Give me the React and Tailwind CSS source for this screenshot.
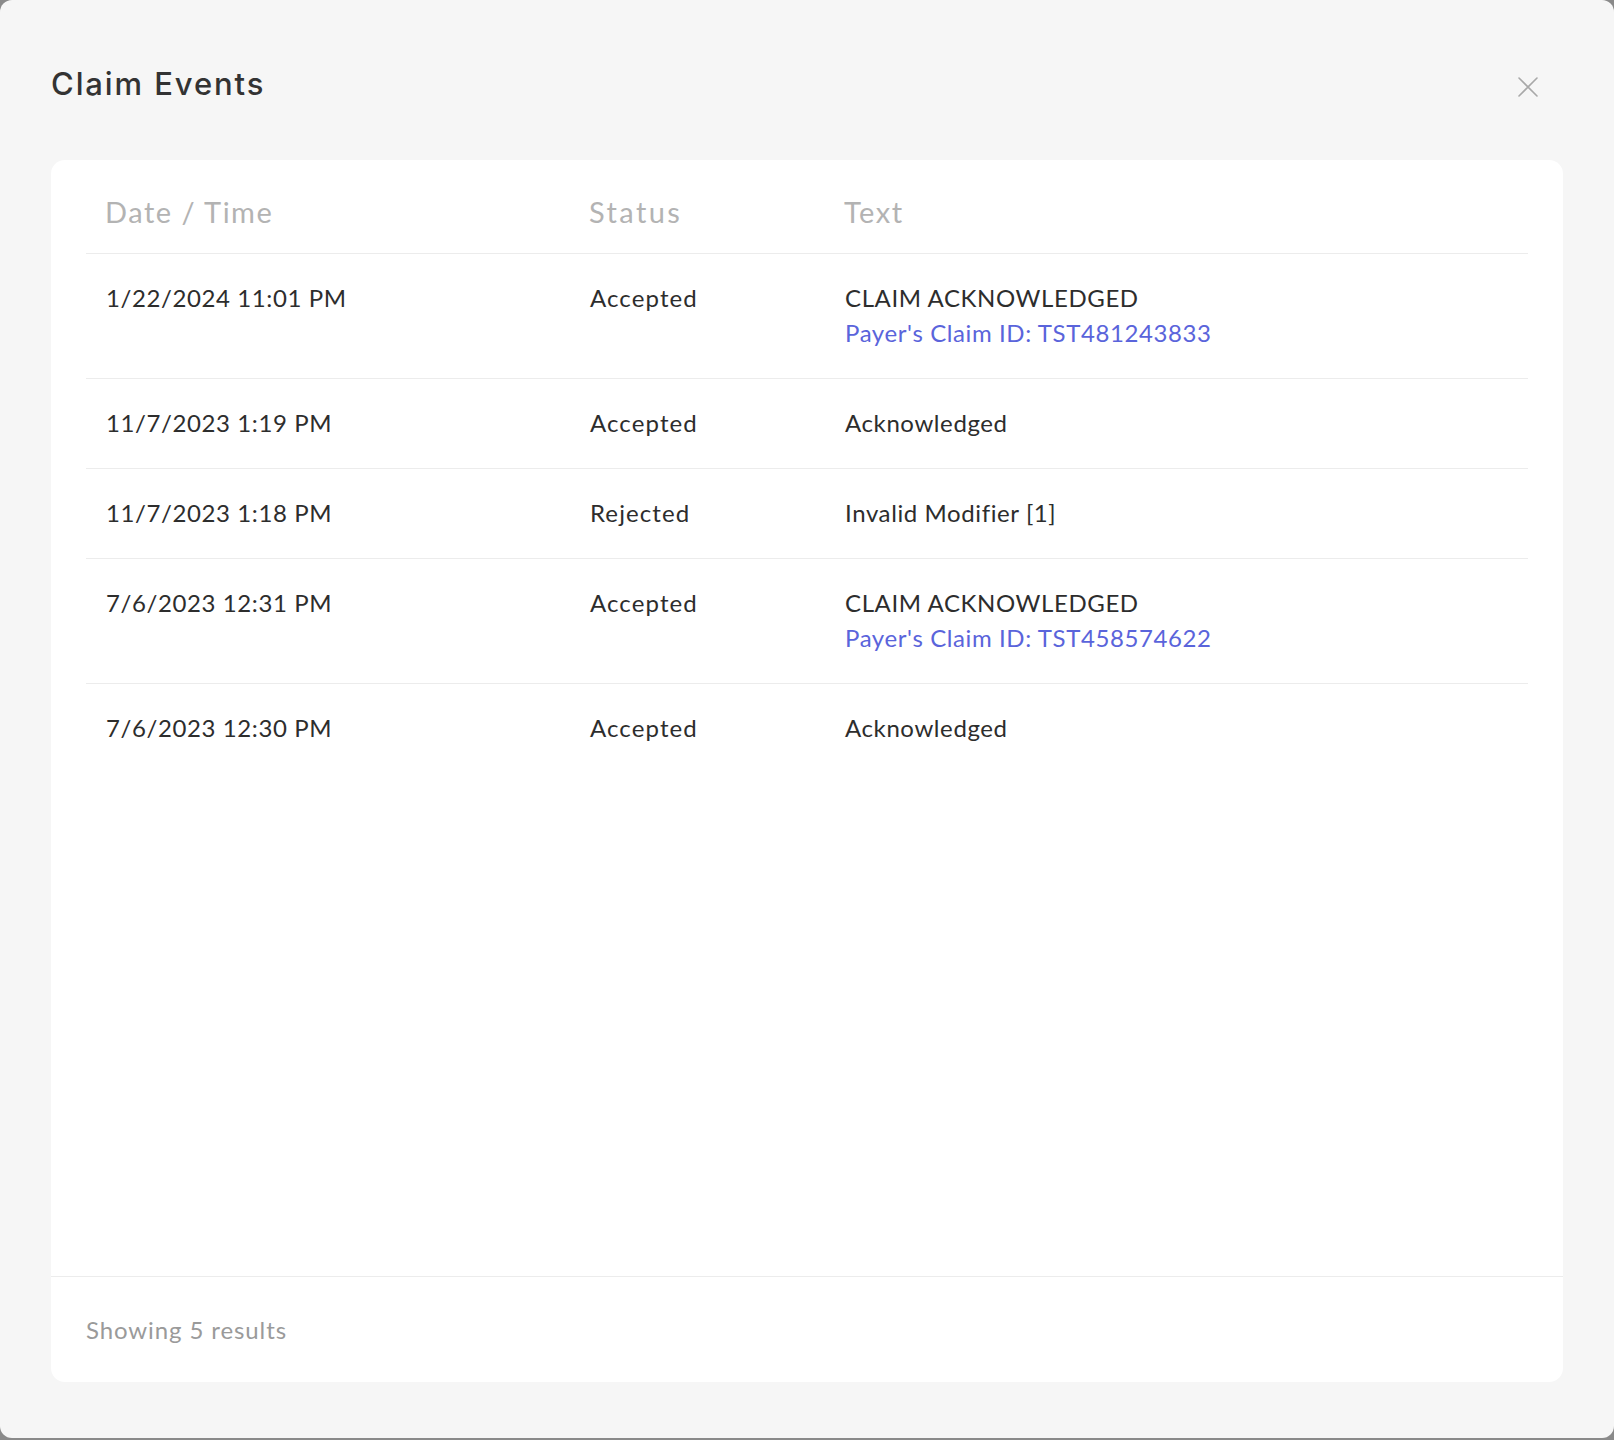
import React from "react";

const rows = [
  { date: "1/22/2024 11:01 PM", status: "Accepted", text: "CLAIM ACKNOWLEDGED", link: "Payer's Claim ID: TST481243833" },
  { date: "11/7/2023 1:19 PM", status: "Accepted", text: "Acknowledged" },
  { date: "11/7/2023 1:18 PM", status: "Rejected", text: "Invalid Modifier [1]" },
  { date: "7/6/2023 12:31 PM", status: "Accepted", text: "CLAIM ACKNOWLEDGED", link: "Payer's Claim ID: TST458574622" },
  { date: "7/6/2023 12:30 PM", status: "Accepted", text: "Acknowledged" },
];

export default function App() {
  return (
    <div className="w-[1614px] h-[1440px] bg-[#8a8a8a] overflow-hidden" style={{ fontFamily: "Lato, 'Noto Sans', sans-serif" }}>
      <div className="w-[1614px] h-[1438px] bg-[#f6f6f6] rounded-[12px] flex flex-col px-[51px] pt-[64px] pb-[56px]">
        <div className="flex items-center justify-between h-[40px]">
          <h1 className="text-[31px] leading-[40px] font-medium text-[#333333] tracking-[1.9px]" style={{ fontFamily: "Inter, Lato, sans-serif" }}>
            Claim Events
          </h1>
          <button className="mr-[25px] mt-[5px] w-[20px] h-[20px] flex items-center justify-center">
            <svg width="20" height="20" viewBox="0 0 20 20" fill="none" stroke="#a8a8a8" strokeWidth="1.6" strokeLinecap="round">
              <path d="M1 1L19 19M19 1L1 19" />
            </svg>
          </button>
        </div>
        <div className="mt-[56px] flex-1 bg-white rounded-[14px] flex flex-col">
          <div className="flex-1 px-[35px] pt-[34px]">
            <div className="grid grid-cols-[485px_255px_1fr] border-b border-[#ececec] pb-[24px] text-[29px] leading-[35px] tracking-[1.5px] text-[#b3b3b3]">
              <div className="pl-[19px]">Date / Time</div>
              <div className="pl-[18px] tracking-[2.4px]">Status</div>
              <div className="pl-[18px]">Text</div>
            </div>
            {rows.map((r, i) => (
              <div
                key={i}
                className={`grid grid-cols-[485px_255px_1fr] pt-[26px] pb-[28px] text-[24px] leading-[35px] tracking-[0.6px] text-[#2d2d2d] ${i < rows.length - 1 ? "border-b border-[#ececec]" : ""}`}
              >
                <div className="pl-[20px]">{r.date}</div>
                <div className="pl-[19px] tracking-[1.1px]">{r.status}</div>
                <div className="pl-[19px]">
                  <div>{r.text}</div>
                  {r.link && <div className="text-[#5a64db]">{r.link}</div>}
                </div>
              </div>
            ))}
          </div>
          <div className="h-[106px] border-t border-[#ececec] flex items-center px-[35px]">
            <span className="text-[24px] tracking-[0.9px] text-[#9a9a9a]">Showing 5 results</span>
          </div>
        </div>
      </div>
    </div>
  );
}
